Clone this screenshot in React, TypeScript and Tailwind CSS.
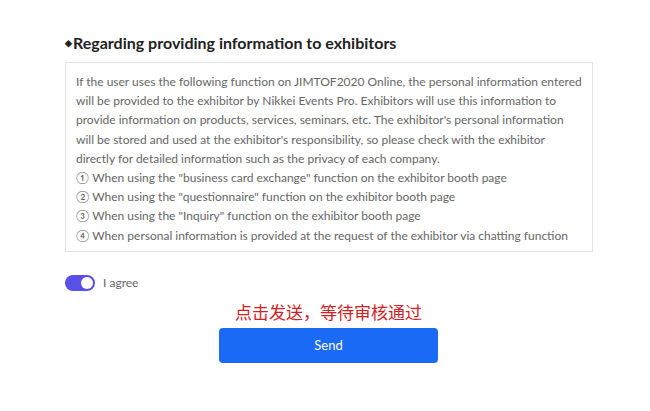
const lines = [
  "If the user uses the following function on JIMTOF2020 Online, the personal information entered",
  "will be provided to the exhibitor by Nikkei Events Pro. Exhibitors will use this information to",
  "provide information on products, services, seminars, etc. The exhibitor's personal information",
  "will be stored and used at the exhibitor's responsibility, so please check with the exhibitor",
  "directly for detailed information such as the privacy of each company.",
  '① When using the "business card exchange" function on the exhibitor booth page',
  '② When using the "questionnaire" function on the exhibitor booth page',
  '③ When using the "Inquiry" function on the exhibitor booth page',
  "④ When personal information is provided at the request of the exhibitor via chatting function",
];

export default function App() {
  const font = { fontFamily: 'Lato, "Noto Sans", sans-serif' };
  return (
    <div className="w-[650px] h-[411px] bg-white" style={font}>
      <div className="pl-[65px] pr-[57px] pt-[33px]">
        <h2 className="flex items-center text-[16px] font-bold text-[#222] leading-5">
          <span className="text-[9px] mr-[1px]">◆</span>
          Regarding providing information to exhibitors
        </h2>
        <div className="mt-[9px] h-[190px] border border-[#e3e3e3] pl-[10px] pr-2 pt-[9px] text-[12px] leading-[19.2px] text-[#666]">
          {lines.map((l) => (
            <p key={l} className="whitespace-nowrap">
              {l}
            </p>
          ))}
        </div>
        <div className="mt-[22px] flex items-center gap-2">
          <div className="w-[30px] h-4 rounded-full bg-[#5a4fe6] flex items-center justify-end pr-[2px]">
            <div className="w-3 h-3 rounded-full bg-white" />
          </div>
          <span className="text-[12px] text-[#666]">I agree</span>
        </div>
        <div className="flex flex-col items-center w-[219px] ml-[154px]">
          <p
            className="mt-[8px] text-[17px] leading-6 text-[#cf2227] whitespace-nowrap"
            style={{ fontFamily: '"Noto Sans CJK SC", sans-serif' }}
          >
            点击发送，等待审核通过
          </p>
          <button className="mt-[4px] w-[219px] h-[35px] rounded-[4px] bg-[#1a6af5] text-white text-[13px]">
            Send
          </button>
        </div>
      </div>
    </div>
  );
}
